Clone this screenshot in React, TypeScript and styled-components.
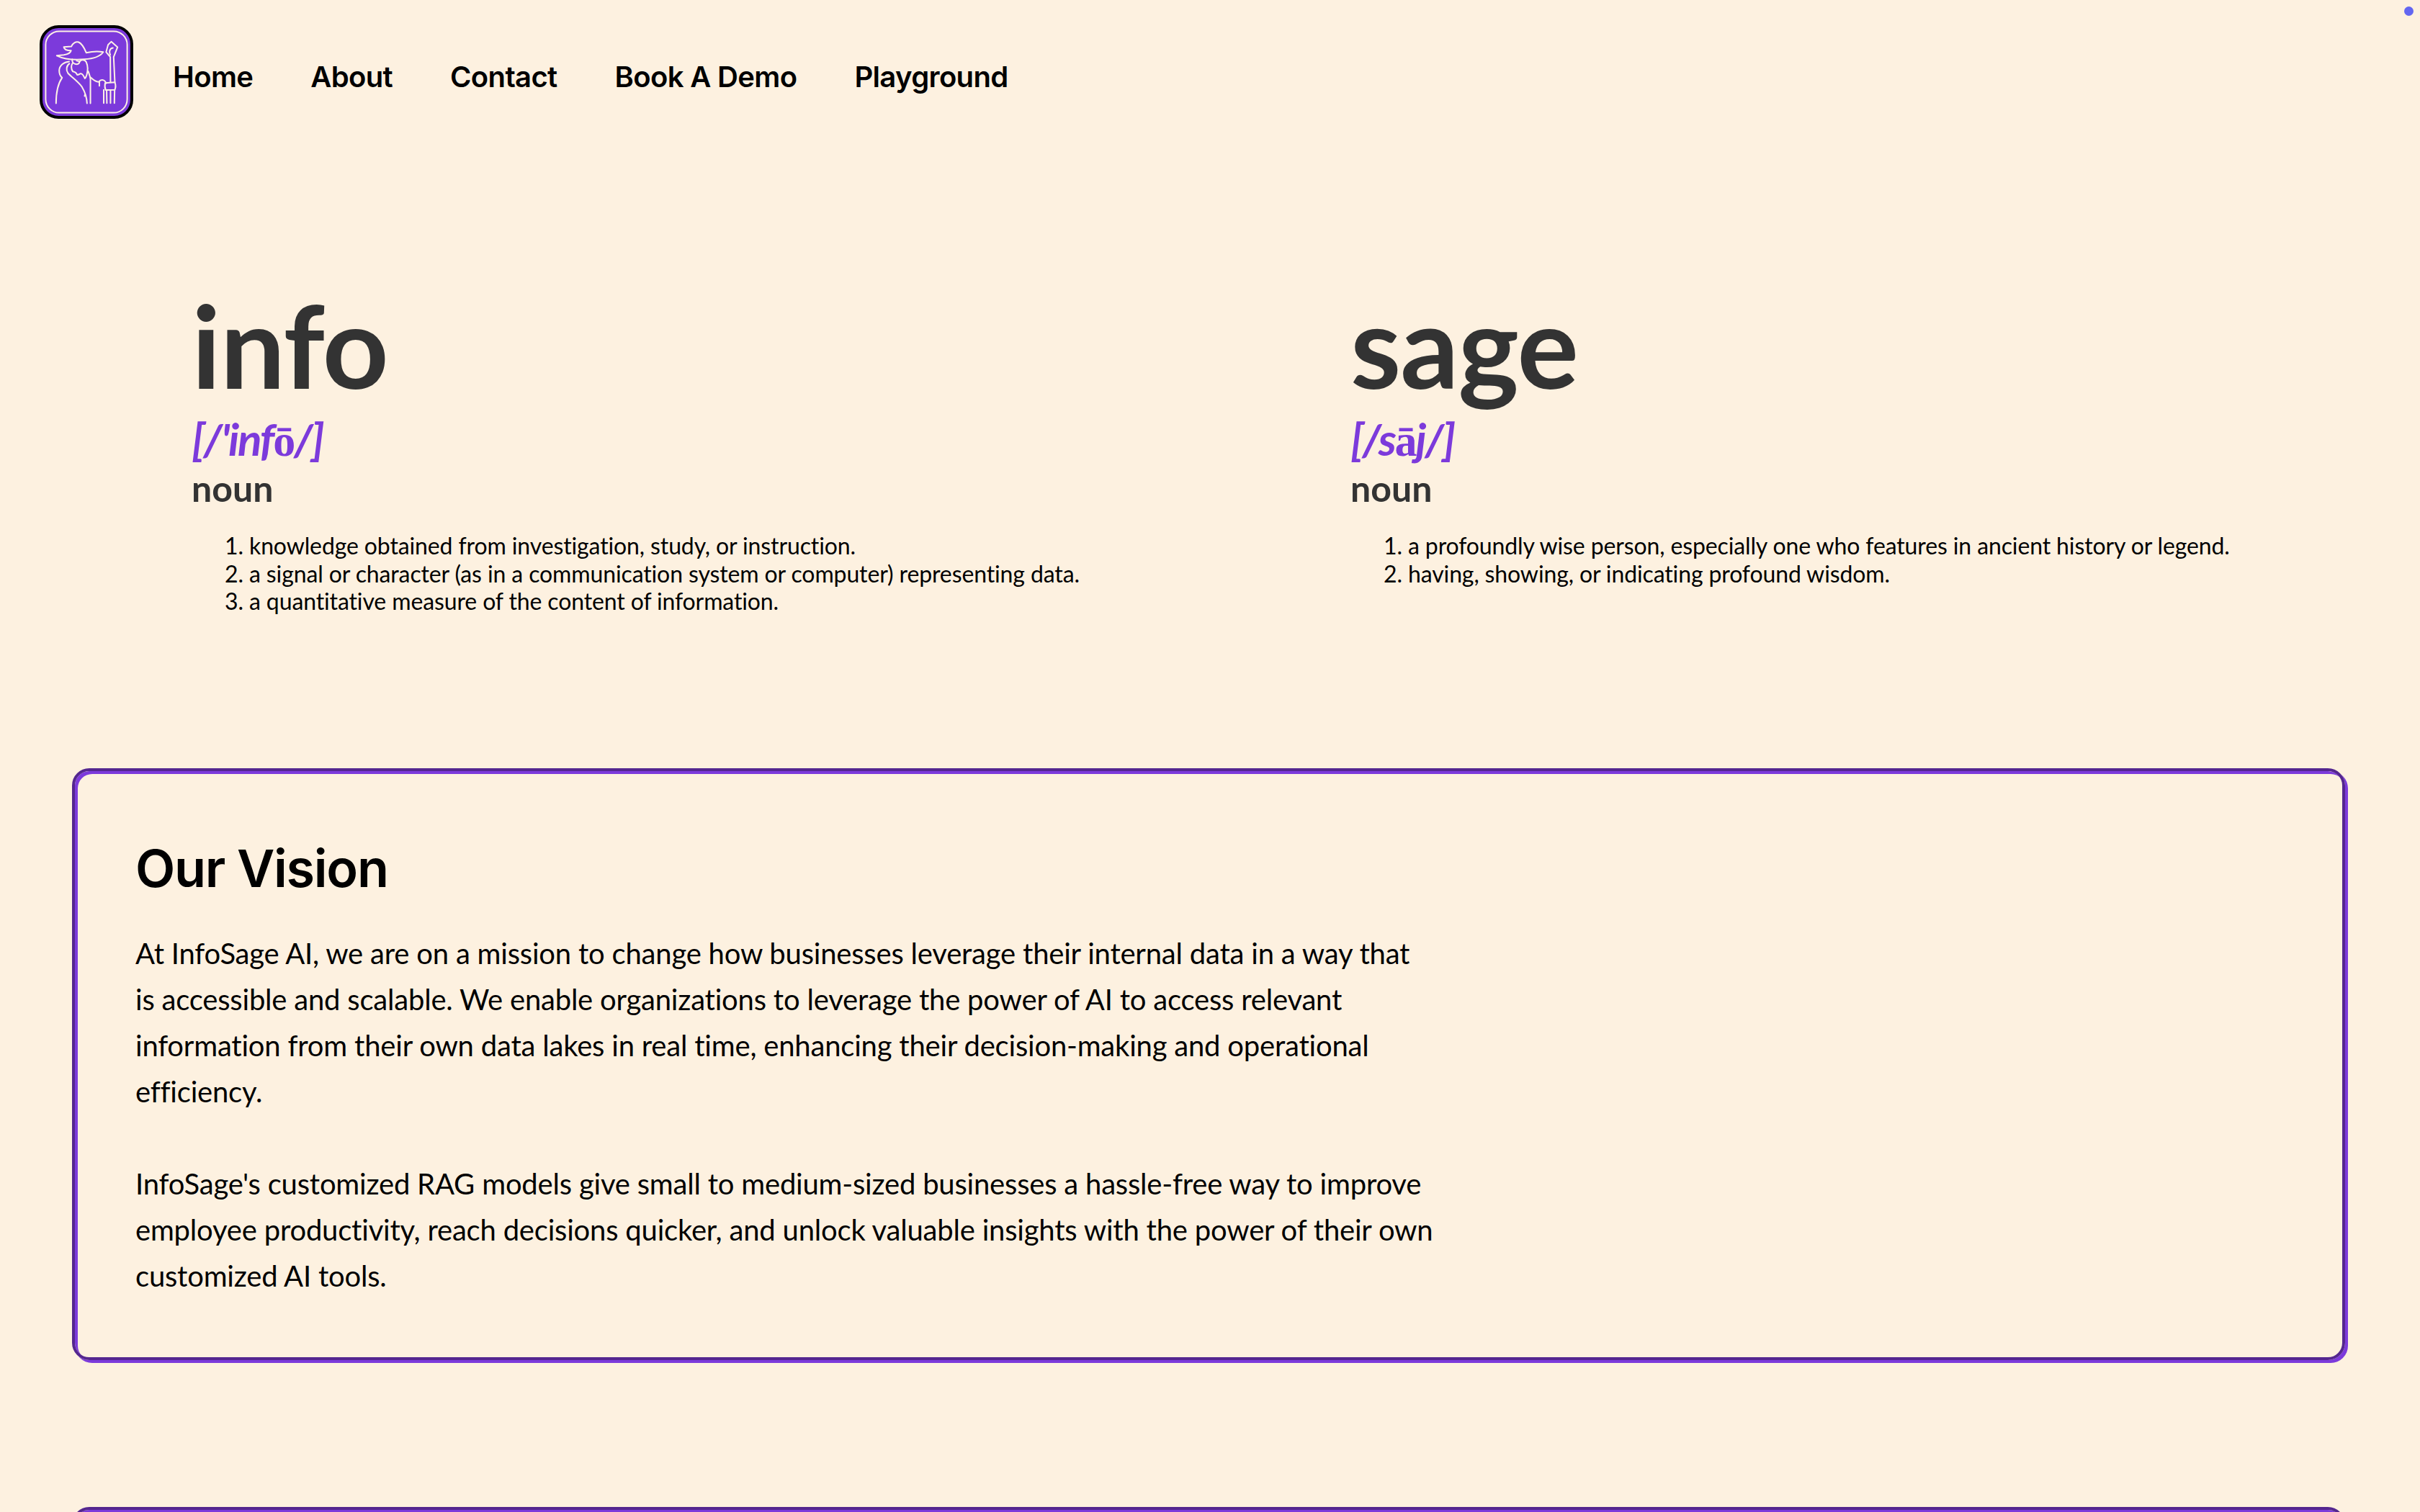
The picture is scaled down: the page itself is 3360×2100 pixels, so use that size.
import React from "react";
import styled, { createGlobalStyle } from "styled-components";

const Global = createGlobalStyle`
  html, body { margin: 0; padding: 0; background: #fdf1e0; }
  body { font-family: "Lato", "Noto Sans", sans-serif; color: #000; overflow: hidden; height: 2100px; }
`;

const Page = styled.div`
  position: relative;
  width: 3360px;
  height: 2100px;
  overflow: hidden;
  background: #fdf1e0;
`;

const Dot = styled.span`
  position: absolute;
  top: 9px;
  right: 9px;
  width: 13px;
  height: 13px;
  border-radius: 50%;
  background: #6366f1;
`;

const Header = styled.header`
  display: flex;
  align-items: flex-start;
  gap: 55px;
  padding: 35px 0 0 55px;
  height: 130px;
`;

const Logo = styled.svg`
  width: 130px;
  height: 130px;
  display: block;
  flex: none;
`;

const Nav = styled.nav`
  display: flex;
  gap: 80px;
  padding-top: 48px;
`;

const NavLink = styled.a`
  font-family: "Inter", "Liberation Sans", sans-serif;
  font-size: 40px;
  font-weight: 600;
  letter-spacing: -0.65px;
  line-height: 48px;
  color: #000;
  text-decoration: none;
`;

const Definitions = styled.section`
  display: grid;
  grid-template-columns: 1609px 1fr;
  padding: 233px 0 0 266px;
  height: 902px;
  box-sizing: border-box;
`;

const Entry = styled.article`
  color: #333;
`;

const Word = styled.h1`
  margin: 0;
  font-size: 160px;
  font-weight: 700;
  line-height: 160px;
  letter-spacing: -1px;
  color: #333;
`;

const Pronunciation = styled.div`
  margin-top: 19px;
  font-size: 62px;
  font-style: italic;
  font-weight: 700;
  letter-spacing: -2.2px;
  line-height: 64px;
  color: #7c3adb;
`;

const Fallback = styled.span`
  font-family: "Liberation Serif", serif;
  font-style: normal;
  font-weight: 700;
`;

const Kind = styled.div`
  margin-top: 5px;
  font-size: 50px;
  font-weight: 700;
  line-height: 58px;
  color: #333;
`;

const Senses = styled.ol`
  margin: 32px 0 0;
  padding: 0 0 0 80px;
  font-size: 32px;
  letter-spacing: -0.12px;
  line-height: 38.5px;
  color: #000;
`;

const Card = styled.section`
  box-sizing: border-box;
  margin: 0 104px 0 100px;
  padding: 93px 84px 81px;
  border: 4px solid #54268f;
  border-radius: 24px;
  box-shadow: 4px 4px 0 #7c3adb, inset 4px 4px 0 #7c3adb;
  & + & { margin-top: 204px; }
`;

const CardTitle = styled.h2`
  margin: 0 0 44px;
  font-family: "Inter", "Liberation Sans", sans-serif;
  font-size: 72px;
  font-weight: 600;
  line-height: 84px;
  letter-spacing: -1.3px;
  color: #000;
`;

const Body = styled.p`
  margin: 0 0 64px;
  max-width: 1830px;
  font-size: 40px;
  letter-spacing: -0.2px;
  line-height: 64px;
  color: #000;
  &:last-child { margin-bottom: 0; }
`;

const WizardLogo = () => (
  <Logo viewBox="75 45 387 387" aria-hidden="true">
    <rect x="81" y="51" width="375" height="375" rx="72" fill="#7c3adb" stroke="#000" strokeWidth="12" />
    <rect x="100" y="70" width="337" height="337" rx="56" fill="none" stroke="#fdf0e6" strokeWidth="6" />
    <g fill="none" stroke="#fdf0e6" strokeWidth="6" strokeLinecap="round" strokeLinejoin="round">
      <path d="M146 171C175 185 215 190 260 186C295 184 325 175 338 156C315 152 290 154 268 159C260 140 248 120 236 115C225 112 212 118 206 133L175 135C177 146 190 150 205 150C203 158 195 165 175 168L146 171Z" />
      <path d="M210 186C208 196 214 204 224 206C234 208 240 202 240 196" />
      <path d="M228 192L240 195" />
      <path d="M240 196C246 186 262 186 268 198C274 212 274 235 270 250C268 258 265 263 262 265C256 252 250 244 245 245C238 248 232 252 230 250C228 244 224 238 212 236C205 225 205 212 211 202" />
      <path d="M197 195C175 197 157 212 156 232C156 246 160 256 168 262C152 285 143 325 143 368" />
      <path d="M198 204C186 212 183 230 192 243C205 258 232 276 250 300C262 320 270 345 271 368" />
      <path d="M276 236C280 248 284 256 285 268L285 368" />
      <path d="M262 333L261 338" />
      <path d="M285 260C296 270 306 281 320 279C326 270 342 266 350 285" />
      <path d="M322 279L322 296" />
      <path d="M346 284L386 281C390 292 390 302 386 312L348 313C344 304 344 294 346 284Z" />
      <path d="M340 312L340 367M352 313L353 367M368 313L368 367M385 312L384 367" />
      <path d="M368 281L367 176L350 156L358 126L371 113L397 136L381 176L386 281" />
      <path d="M367 168C362 158 362 142 378 139" />
    </g>
  </Logo>
);

export default function App() {
  return (
    <Page>
      <Global />
      <Dot />
      <Header>
        <WizardLogo />
        <Nav>
          <NavLink href="#">Home</NavLink>
          <NavLink href="#">About</NavLink>
          <NavLink href="#">Contact</NavLink>
          <NavLink href="#">Book A Demo</NavLink>
          <NavLink href="#">Playground</NavLink>
        </Nav>
      </Header>
      <Definitions>
        <Entry>
          <Word>info</Word>
          <Pronunciation>[/'inf<Fallback>ō</Fallback>/]</Pronunciation>
          <Kind>noun</Kind>
          <Senses>
            <li>knowledge obtained from investigation, study, or instruction.</li>
            <li>a signal or character (as in a communication system or computer) representing data.</li>
            <li>a quantitative measure of the content of information.</li>
          </Senses>
        </Entry>
        <Entry>
          <Word>sage</Word>
          <Pronunciation>[/s<Fallback>ā</Fallback>j/]</Pronunciation>
          <Kind>noun</Kind>
          <Senses>
            <li>a profoundly wise person, especially one who features in ancient history or legend.</li>
            <li>having, showing, or indicating profound wisdom.</li>
          </Senses>
        </Entry>
      </Definitions>
      <Card>
        <CardTitle>Our Vision</CardTitle>
        <Body>At InfoSage AI, we are on a mission to change how businesses leverage their internal data in a way that<br />is accessible and scalable. We enable organizations to leverage the power of AI to access relevant information from their own data lakes in real time, enhancing their decision-making and operational efficiency.</Body>
        <Body>InfoSage's customized RAG models give small to medium-sized businesses a hassle-free way to improve employee productivity, reach decisions quicker, and unlock valuable insights with the power of their own customized AI tools.</Body>
      </Card>
      <Card />
    </Page>
  );
}
